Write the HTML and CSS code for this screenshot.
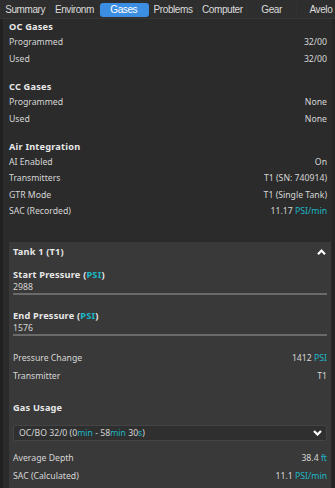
FILE: index.html
```html
<!DOCTYPE html>
<html>
<head>
<meta charset="utf-8">
<link rel="stylesheet" href="styles.css">
</head>
<body>
<div class="app">
  <nav class="tabs">
    <div class="tab">Summary</div>
    <div class="tab">Environm</div>
    <div class="tab active">Gases</div>
    <div class="tab">Problems</div>
    <div class="tab">Computer</div>
    <div class="tab">Gear</div>
    <div class="tab">Avelo</div>
  </nav>
  <main class="content">
    <section class="group">
      <h2 class="heading">OC Gases</h2>
      <div class="row"><span>Programmed</span><span>32/00</span></div>
      <div class="row"><span>Used</span><span>32/00</span></div>
    </section>
    <section class="group">
      <h2 class="heading">CC Gases</h2>
      <div class="row"><span>Programmed</span><span>None</span></div>
      <div class="row"><span>Used</span><span>None</span></div>
    </section>
    <section class="group">
      <h2 class="heading">Air Integration</h2>
      <div class="row"><span>AI Enabled</span><span>On</span></div>
      <div class="row"><span>Transmitters</span><span>T1 (SN: 740914)</span></div>
      <div class="row"><span>GTR Mode</span><span>T1 (Single Tank)</span></div>
      <div class="row"><span>SAC (Recorded)</span><span>11.17 <span class="u">PSI/min</span></span></div>
    </section>
    <section class="panel">
      <div class="panel-head">
        <span class="panel-title">Tank 1 (T1)</span>
        <svg class="chev" width="9" height="6" viewBox="0 0 9 6"><polyline points="1,5.2 4.5,1.6 8,5.2" fill="none" stroke="#fff" stroke-width="2.2"/></svg>
      </div>
      <div class="field first">
        <div class="field-label">Start Pressure (<span class="u">PSI</span>)</div>
        <div class="field-input">2988</div>
      </div>
      <div class="field">
        <div class="field-label">End Pressure (<span class="u">PSI</span>)</div>
        <div class="field-input">1576</div>
      </div>
      <div class="prows">
        <div class="prow"><span>Pressure Change</span><span>1412 <span class="u">PSI</span></span></div>
        <div class="prow"><span>Transmitter</span><span>T1</span></div>
      </div>
      <h3 class="sub-heading">Gas Usage</h3>
      <div class="select">
        <span>OC/BO 32/0 (0<span class="u">min</span> - 58<span class="u">min</span> 30<span class="u">s</span>)</span>
        <svg class="chev" width="9" height="6" viewBox="0 0 9 6"><polyline points="1,0.9 4.5,4.5 8,0.9" fill="none" stroke="#fff" stroke-width="2.2"/></svg>
      </div>
      <div class="prows tight">
        <div class="prow"><span>Average Depth</span><span>38.4 <span class="u">ft</span></span></div>
        <div class="prow"><span>SAC (Calculated)</span><span>11.1 <span class="u">PSI/min</span></span></div>
      </div>
    </section>
  </main>
</div>
</body>
</html>
```
FILE: styles.css
```css
* { box-sizing: border-box; margin: 0; padding: 0; }
html, body { height: 100%; }
body {
  background: #2b2b2b;
  font-family: "Noto Sans", "DejaVu Sans", sans-serif;
  color: #d6d6d6;
  overflow: hidden;
}
.app {
  width: 335px;
  height: 488px;
  display: flex;
  flex-direction: column;
  overflow: hidden;
}
.tabs {
  flex: none;
  display: flex;
  height: 19px;
  padding: 3px 0 1px 1px;
  background: #2e2e2e;
  border-bottom: 1px solid #383838;
  overflow: hidden;
}
.tab {
  flex: 0 0 49.3px;
  text-align: center;
  font: 10px/14px "Liberation Sans", Arial, sans-serif;
  letter-spacing: -0.4px;
  color: #dcdcdc;
  white-space: nowrap;
  overflow: hidden;
  border-right: 1px solid #323232;
}
.tab.active {
  background: #3b8ee2;
  color: #fff;
  border-radius: 3px;
  border-right-color: transparent;
}
.content {
  flex: 1;
  border-left: 3px solid #212121;
  border-right: 3px solid #252525;
  padding: 0 1px 0 6px;
}
.group + .group { margin-top: 11.8px; }
.heading {
  height: 15px;
  line-height: 15px;
  font-size: 9.2px;
  font-weight: 700;
  letter-spacing: 0.2px;
  color: #e8e8e8;
}
.row {
  display: flex;
  justify-content: space-between;
  align-items: center;
  height: 16.5px;
  padding-right: 4px;
  font-size: 8.7px;
}
.u { color: #1bb8c8; }
.panel {
  margin-top: 22.5px;
  background: #393939;
  padding: 0 4px;
  height: 260px;
}
.panel-head {
  height: 19px;
  display: flex;
  justify-content: space-between;
  align-items: center;
  padding-right: 1.5px;
}
.panel-title, .field-label, .sub-heading {
  font-size: 9.2px;
  font-weight: 700;
  letter-spacing: 0.2px;
  color: #e8e8e8;
}
.field.first { margin-top: 7px; }
.field { margin-top: 13.7px; }
.field-label { line-height: 14px; height: 14px; }
.field-input {
  height: 13px;
  line-height: 11px;
  font-size: 8.7px;
  border-bottom: 2px solid #6a6a6a;
}
.prows { margin-top: 13.6px; }
.prows.tight { margin-top: 7.7px; }
.prow {
  display: flex;
  justify-content: space-between;
  align-items: center;
  height: 18px;
  font-size: 8.7px;
}
.sub-heading { margin-top: 16px; height: 14px; line-height: 14px; }
.select {
  margin-top: 10px;
  height: 16px;
  display: flex;
  justify-content: space-between;
  align-items: center;
  padding: 0 4.5px 0 5px;
  background: #2f2f2f;
  border: 1px solid #444;
  border-radius: 2px;
  font-size: 8.7px;
}
```
